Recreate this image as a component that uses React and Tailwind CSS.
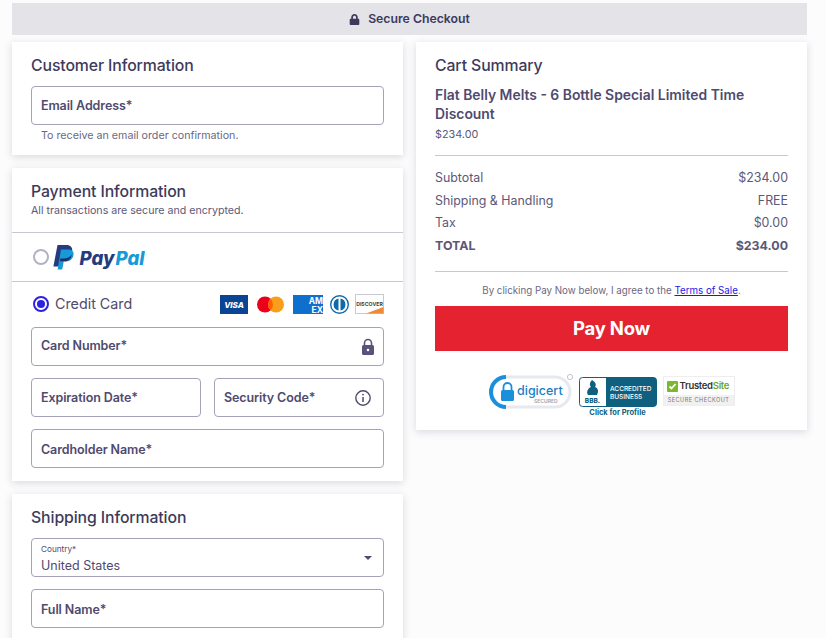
import { FaLock } from "react-icons/fa";

const font = { fontFamily: "Inter, 'Noto Sans', sans-serif" };

const Field = ({ label, className = "", labelClass = "pt-[1px]", children }) => (
  <div className={`flex h-[39px] items-center justify-between rounded-[4px] border border-[#a5a2b8] bg-white pr-[9px] pl-[9px] ${className}`}>
    <span className={`text-[12.5px] font-semibold tracking-[-0.1px] text-[#4f4a6e] ${labelClass}`}>{label}</span>
    {children}
  </div>
);

const Row = ({ label, value, bold }) => (
  <div className={`flex justify-between text-[12.4px] leading-[22.5px] text-[#5c5878] ${bold ? "font-bold" : ""}`}>
    <span>{label}</span>
    <span>{value}</span>
  </div>
);

const Card = ({ className = "", children }) => (
  <div className={`bg-white shadow-[0_2px_8px_rgba(60,60,90,0.18)] ${className}`}>{children}</div>
);

const Heading = ({ children }) => (
  <h2 className="text-[15.8px] leading-[21px] font-medium tracking-[-0.1px] text-[#3d3a5c]">{children}</h2>
);

const PayPalLogo = () => (
  <svg width="92" height="25" viewBox="0 0 92 25">
    <path d="M4.5 0h8.5c4.4 0 6.8 2.4 6.1 6.2-.9 4.8-4 7.3-8.5 7.3H7.4L6 21.5H0.4z" fill="#253b80" />
    <path d="M8 4.5h7.5c3.8 0 5.6 2.3 5 5.6-.7 4.2-3.6 6.4-7.4 6.4h-2.4L9.2 24.5H4.6z" fill="#179bd7" />
    <path d="M7.4 13.5h3.4c3.4 0 6.4-1.2 8-4-.8 4.6-3.4 6.6-7 6.8H6.9z" fill="#222d65" />
    <text x="26.5" y="19.5" fontFamily="Inter, sans-serif" fontSize="18.6" fontWeight="800" fontStyle="italic" fill="#253b80">Pay</text>
    <text x="62.5" y="19.5" fontFamily="Inter, sans-serif" fontSize="18.6" fontWeight="800" fontStyle="italic" fill="#179bd7">Pal</text>
  </svg>
);

const CardLogos = () => (
  <div className="flex items-center">
    <svg width="28" height="19" viewBox="0 0 28 19" className="mr-[9px]">
      <rect width="28" height="19" fill="#0a4595" />
      <text x="14" y="13" textAnchor="middle" fontFamily="Inter, sans-serif" fontSize="8" fontWeight="800" fontStyle="italic" fill="#fff">VISA</text>
    </svg>
    <svg width="27" height="17" viewBox="0 0 27 17" className="mr-[9px]">
      <circle cx="8" cy="8.5" r="8" fill="#eb001b" />
      <circle cx="19" cy="8.5" r="8" fill="#f79e1b" />
      <path d="M13.5 2.7a8 8 0 0 1 0 11.6a8 8 0 0 1 0-11.6z" fill="#ff5f00" />
    </svg>
    <svg width="30" height="19" viewBox="0 0 30 19" className="mr-[7px]">
      <rect width="30" height="19" fill="#0f6fcd" />
      <text x="30" y="8.5" textAnchor="end" fontFamily="Inter, sans-serif" fontSize="8.5" fontWeight="700" fill="#fff">AM</text>
      <text x="30" y="18" textAnchor="end" fontFamily="Inter, sans-serif" fontSize="8.5" fontWeight="700" fill="#fff">EX</text>
    </svg>
    <svg width="19" height="19" viewBox="0 0 19 19" className="mr-[6px]">
      <circle cx="9.5" cy="9.5" r="8.8" fill="#fff" stroke="#0f6aa8" strokeWidth="1.4" />
      <path d="M8.5 3.6a6 6 0 0 0 0 11.8zM10.5 3.6a6 6 0 0 1 0 11.8z" fill="#0f6aa8" />
    </svg>
    <svg width="29" height="20" viewBox="0 0 29 20">
      <rect x="0.5" y="0.5" width="28" height="19" fill="#fff" stroke="#c9c9d0" />
      <path d="M11 19.5 L28.5 13 V19.5z" fill="#ef8a35" />
      <text x="14.5" y="11.5" textAnchor="middle" fontFamily="Inter, sans-serif" fontSize="5.2" fontWeight="700" fill="#444">DISCOVER</text>
    </svg>
  </div>
);

const Badges = () => (
  <div className="mt-[23px] flex items-start justify-center">
    <svg width="86" height="37" viewBox="0 0 86 37" className="mr-[4px]">
      <rect x="3" y="3" width="78" height="30" rx="15" fill="#fff" stroke="#e6eaef" strokeWidth="3" />
      <path d="M17 3A15 15 0 0 0 17 33" fill="none" stroke="#1a8fdc" strokeWidth="4" />
      <rect x="12" y="16" width="13" height="11" rx="1.5" fill="#1a8fdc" />
      <path d="M14.5 16v-3a4 4 0 0 1 8 0v3" fill="none" stroke="#1a8fdc" strokeWidth="1.8" />
      <text x="28" y="20.5" fontFamily="Inter, sans-serif" fontSize="12.5" fontWeight="500" fill="#1a7fc4">digicert</text>
      <text x="45" y="28.5" fontFamily="Inter, sans-serif" fontSize="5" fontWeight="600" fill="#9aa3ad">SECURED</text>
      <circle cx="81" cy="3" r="2.6" fill="none" stroke="#aaa" strokeWidth="0.7" />
    </svg>
    <div className="mt-[3px] mr-[6px] flex w-[78px] flex-col items-center">
      <svg width="78" height="30" viewBox="0 0 78 30">
        <rect x="0.5" y="0.5" width="77" height="29" rx="3" fill="#fff" stroke="#0f5f7f" />
        <path d="M27 0.5h47.5a3 3 0 0 1 3 3v23a3 3 0 0 1-3 3H27z" fill="#0f5f7f" />
        <path d="M13 3c3 2 5 4 3 7 3 1 4 4 2 8H9c-2-3 0-7 3-8-2-2-1-5 1-7z" fill="#0f5f7f" />
        <text x="13.5" y="26" textAnchor="middle" fontFamily="Inter, sans-serif" fontSize="6.5" fontWeight="800" fill="#0f5f7f">BBB.</text>
        <text x="31" y="13.5" fontFamily="Inter, sans-serif" fontSize="6.5" fontWeight="500" fill="#fff">ACCREDITED</text>
        <text x="31" y="22" fontFamily="Inter, sans-serif" fontSize="6.5" fontWeight="500" fill="#fff">BUSINESS</text>
      </svg>
      <span className="mt-[1px] text-[7.5px] leading-[10px] font-bold text-[#0f5f7f]">Click for Profile</span>
    </div>
    <div className="mt-[2px] flex h-[30px] w-[72px] flex-col border border-[#eeeeee] bg-[#f1f1f1]">
      <div className="flex h-[18px] items-center gap-[2px] bg-white px-[3px]">
        <span className="flex h-[11px] w-[11px] shrink-0 items-center justify-center rounded-[1px] bg-[#7ab929]">
          <svg width="9" height="9" viewBox="0 0 9 9"><path d="M1.5 4.5l2 2 4-4.5" fill="none" stroke="#fff" strokeWidth="1.8" /></svg>
        </span>
        <span className="text-[9.5px] font-semibold tracking-[-0.3px] text-[#333]">Trusted<span className="text-[#6ca823]">Site</span></span>
      </div>
      <span className="text-center text-[5.5px] leading-[10px] tracking-[0.5px] text-[#777]">SECURE CHECKOUT</span>
    </div>
  </div>
);

export default function App() {
  return (
    <div className="h-[638px] overflow-hidden bg-[#fcfcfd] pt-[3px] pr-[19px] pl-[12px]" style={font}>
      <div className="flex h-[32px] items-center justify-center gap-[8px] bg-[#e3e3e8] text-[12.25px] font-semibold text-[#3d3a5c]">
        <FaLock className="h-[11px] w-[11px]" />
        <span>Secure Checkout</span>
      </div>

      <div className="mt-[7px] grid grid-cols-[391px_391px] gap-x-[13px]">
        <div className="flex flex-col gap-[13px]">
          <Card className="h-[113px] px-[19px] pt-[13px]">
            <Heading>Customer Information</Heading>
            <Field label="Email Address*" className="mt-[10px]" />
            <p className="mt-[3px] pl-[10px] text-[10.7px] leading-[15px] text-[#6b6884]">To receive an email order confirmation.</p>
          </Card>

          <Card className="h-[313px]">
            <div className="h-[65px] border-b border-[#c9c8d2] px-[19px] pt-[13px]">
              <Heading>Payment Information</Heading>
              <p className="mt-[1px] text-[10.65px] leading-[15px] text-[#5c5878]">All transactions are secure and encrypted.</p>
            </div>
            <div className="flex h-[49px] items-center border-b border-[#c9c8d2] pl-[21px]">
              <span className="h-[16px] w-[16px] rounded-full border-2 border-[#b3b1c3]" />
              <span className="ml-[4px] pt-[1px]"><PayPalLogo /></span>
            </div>
            <div className="px-[19px] pt-[12px]">
              <div className="flex h-[20px] items-center justify-between">
                <div className="flex items-center gap-[6px] pl-[2px]">
                  <span className="flex h-[16px] w-[16px] items-center justify-center rounded-full border-2 border-[#2c22e0]">
                    <span className="h-[8px] w-[8px] rounded-full bg-[#2c22e0]" />
                  </span>
                  <span className="text-[14.3px] leading-[20px] text-[#4f4a6e]">Credit Card</span>
                </div>
                <CardLogos />
              </div>
              <Field label="Card Number*" labelClass="pb-[1px]" className="mt-[13px]">
                <svg width="14" height="18" viewBox="0 0 14 18" className="mr-[-1px]">
                  <path d="M3.5 8V5a3.5 3.5 0 0 1 7 0v3" fill="none" stroke="#57537a" strokeWidth="1.6" />
                  <rect x="1" y="7" width="12" height="10" rx="1.5" fill="#57537a" />
                  <circle cx="7" cy="12" r="1.3" fill="#fff" />
                </svg>
              </Field>
              <div className="mt-[12px] grid grid-cols-2 gap-x-[13px]">
                <Field label="Expiration Date*" />
                <Field label="Security Code*">
                  <svg width="18" height="18" viewBox="0 0 18 18" className="mr-[2px]">
                    <circle cx="9" cy="9" r="7.2" fill="none" stroke="#4f4a6e" strokeWidth="1.4" />
                    <path d="M9 8v5" stroke="#4f4a6e" strokeWidth="1.5" />
                    <circle cx="9" cy="5.6" r="0.9" fill="#4f4a6e" />
                  </svg>
                </Field>
              </div>
              <Field label="Cardholder Name*" labelClass="pt-[3px]" className="mt-[12px]" />
            </div>
          </Card>

          <Card className="h-[200px] px-[19px] pt-[13px]">
            <Heading>Shipping Information</Heading>
            <div className="relative mt-[10px] h-[39px] rounded-[4px] border border-[#a5a2b8] pl-[9px]">
              <div className="pt-[5px] text-[8.2px] leading-[11px] text-[#4f4a6e]">Country*</div>
              <div className="pt-[2px] text-[12.5px] leading-[18px] text-[#4f4a6e]">United States</div>
              <span className="absolute top-[17px] right-[11px] h-0 w-0 border-x-[4px] border-t-[4px] border-x-transparent border-t-[#4f4a6e]" />
            </div>
            <Field label="Full Name*" labelClass="pt-[3px]" className="mt-[12px]" />
          </Card>
        </div>

        <Card className="h-[388px] self-start px-[19px] pt-[13px]">
          <Heading>Cart Summary</Heading>
          <p className="mt-[9.5px] text-[13.9px] leading-[19px] font-semibold text-[#4f4a6e]">Flat Belly Melts - 6 Bottle Special Limited Time Discount</p>
          <p className="mt-[3.5px] text-[10.8px] leading-[15px] text-[#5c5878]">$234.00</p>
          <div className="mt-[13px] border-t border-[#c9c8d2] pt-[11px]">
            <Row label="Subtotal" value="$234.00" />
            <Row label="Shipping & Handling" value="FREE" />
            <Row label="Tax" value="$0.00" />
            <Row label="TOTAL" value="$234.00" bold />
          </div>
          <div className="mt-[14px] border-t border-[#c9c8d2] pt-[12px] text-center text-[9.75px] leading-[14px] text-[#6b6884]">
            By clicking Pay Now below, I agree to the <span className="text-[#1a1ae6] underline">Terms of Sale</span>.
          </div>
          <button className="mt-[8px] block h-[45px] w-full bg-[#e5222f] text-[18.5px] font-bold tracking-[-0.2px] text-white">Pay Now</button>
          <Badges />
        </Card>
      </div>
    </div>
  );
}
